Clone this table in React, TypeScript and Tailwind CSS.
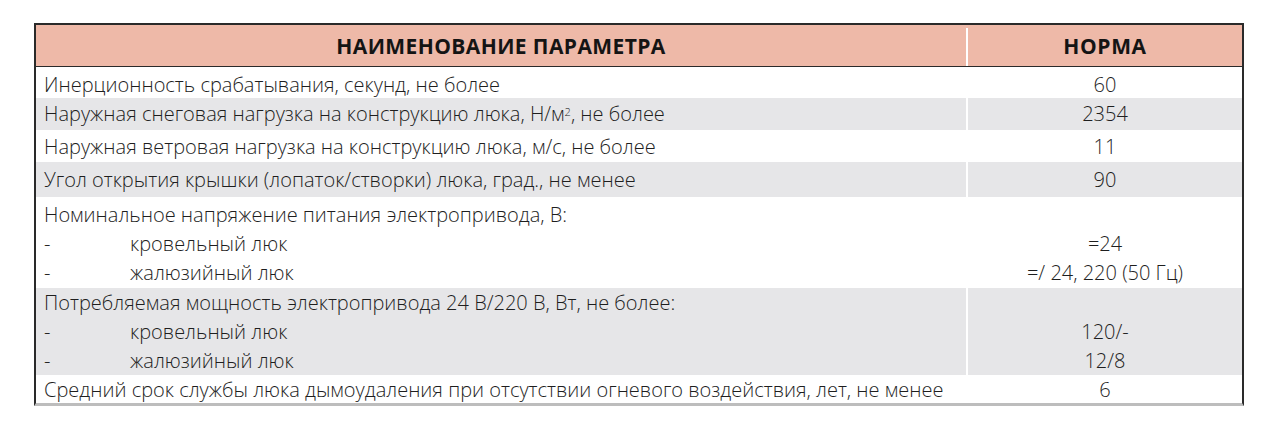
import React from 'react'

type Row = {
  lines: { label: string; indent?: boolean; value?: string; sup?: boolean }[]
  gray?: boolean
  height: string
  pad: string
}

const rows: Row[] = [
  { lines: [{ label: 'Инерционность срабатывания, секунд, не более', value: '60' }], height: 'h-[31px]', pad: 'pt-[3px]' },
  {
    lines: [{ label: 'Наружная снеговая нагрузка на конструкцию люка, Н/м', sup: true, value: '2354' }],
    gray: true,
    height: 'h-[32px]',
    pad: 'pt-[1px]',
  },
  { lines: [{ label: 'Наружная ветровая нагрузка на конструкцию люка, м/с, не более', value: '11' }], height: 'h-[32px]', pad: 'pt-[2px]' },
  {
    lines: [{ label: 'Угол открытия крышки (лопаток/створки) люка, град., не менее', value: '90' }],
    gray: true,
    height: 'h-[35px]',
    pad: 'pt-[3px]',
  },
  {
    lines: [
      { label: 'Номинальное напряжение питания электропривода, В:' },
      { label: 'кровельный люк', indent: true, value: '=24' },
      { label: 'жалюзийный люк', indent: true, value: '=/ 24, 220 (50 Гц)' },
    ],
    height: 'h-[91px]',
    pad: 'pt-[3px]',
  },
  {
    lines: [
      { label: 'Потребляемая мощность электропривода 24 В/220 В, Вт, не более:' },
      { label: 'кровельный люк', indent: true, value: '120/-' },
      { label: 'жалюзийный люк', indent: true, value: '12/8' },
    ],
    gray: true,
    height: 'h-[87px]',
    pad: 'pt-[0px]',
  },
  {
    lines: [{ label: 'Средний срок службы люка дымоудаления при отсутствии огневого воздействия, лет, не менее', value: '6' }],
    height: 'h-[28px]',
    pad: 'pt-[0px]',
  },
]

export default function App() {
  return (
    <div className="w-[1282px] h-[432px] bg-white pt-[23px] pl-[34px] font-['Open_Sans',sans-serif]">
      <div className="w-[1210px] border-x-2 border-t-2 border-[#2a2a2a] border-b-[3px] border-b-[#bdbdbd]">
        {/* Header */}
        <div className="flex h-[42px] pt-[3px] bg-[#eeb9a8] border-b border-[#2a2a2a]">
          <div className="w-[930px] flex items-center justify-center text-[21px] font-bold text-[#141414] tracking-[0.4px]">
            НАИМЕНОВАНИЕ ПАРАМЕТРА
          </div>
          <div className="flex-1 flex items-center justify-center border-l-2 border-white text-[21px] font-bold text-[#141414] tracking-[0.6px]">
            НОРМА
          </div>
        </div>

        {rows.map((row, i) => (
          <div key={i} className={`flex ${row.height} ${row.gray ? 'bg-[#e6e6e8]' : 'bg-white'}`}>
            <div className={`w-[930px] pl-[8px] ${row.pad} text-[20px] leading-[29px] text-[#1e1e1e] font-light`}>
              {row.lines.map((l, j) => (
                <div key={j} className="flex whitespace-nowrap">
                  {l.indent ? (
                    <>
                      <span className="w-[86px]">-</span>
                      <span>{l.label}</span>
                    </>
                  ) : (
                    <span>
                      {l.label}
                      {l.sup && (
                        <>
                          <sup className="text-[11px]">2</sup>, не более
                        </>
                      )}
                    </span>
                  )}
                </div>
              ))}
            </div>
            <div className={`flex-1 border-l-2 border-white ${row.pad} text-[20px] leading-[29px] text-[#1e1e1e] font-light text-center`}>
              {row.lines.map((l, j) => (
                <div key={j} className="whitespace-nowrap">
                  {l.value ?? '\u00a0'}
                </div>
              ))}
            </div>
          </div>
        ))}
      </div>
    </div>
  )
}
